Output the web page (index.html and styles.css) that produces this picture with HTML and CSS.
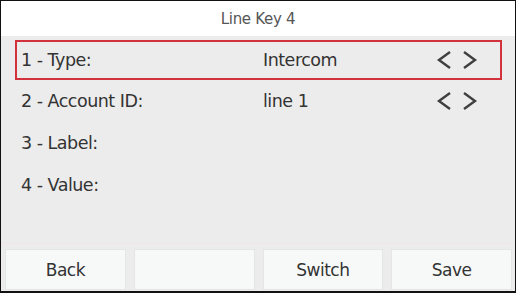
FILE: index.html
```html
<!DOCTYPE html>
<html>

<head>
  <meta charset="UTF-8">
  <link rel="stylesheet" href="styles.css">
</head>

<body>
  <div class="screen">
    <div class="title-bar">Line Key 4</div>
    <div class="list">
      <div class="row selected">
        <span class="label">1 - Type:</span>
        <span class="value">Intercom</span>
        <span class="arrows">
          <svg width="16" height="20" viewBox="0 0 16 20"><path d="M14 2 L3 10 L14 18" fill="none" stroke="#3f3f3f" stroke-width="2.4" /></svg>
          <svg width="16" height="20" viewBox="0 0 16 20"><path d="M2 2 L13 10 L2 18" fill="none" stroke="#3f3f3f" stroke-width="2.4" /></svg>
        </span>
      </div>
      <div class="row">
        <span class="label">2 - Account ID:</span>
        <span class="value">line 1</span>
        <span class="arrows">
          <svg width="16" height="20" viewBox="0 0 16 20"><path d="M14 2 L3 10 L14 18" fill="none" stroke="#3f3f3f" stroke-width="2.4" /></svg>
          <svg width="16" height="20" viewBox="0 0 16 20"><path d="M2 2 L13 10 L2 18" fill="none" stroke="#3f3f3f" stroke-width="2.4" /></svg>
        </span>
      </div>
      <div class="row">
        <span class="label">3 - Label:</span>
      </div>
      <div class="row">
        <span class="label">4 - Value:</span>
      </div>
    </div>
    <div class="softkeys">
      <div class="key">Back</div>
      <div class="key"></div>
      <div class="key">Switch</div>
      <div class="key">Save</div>
    </div>
  </div>
</body>

</html>
```

FILE: styles.css
```css
body {
  margin: 0;
  font-family: "DejaVu Sans", sans-serif;
  background-color: #000;
}

.screen {
  width: 516px;
  height: 293px;
  box-sizing: border-box;
  border: 1px solid #111;
  border-bottom-width: 2px;
  background-color: #ececec;
  display: flex;
  flex-direction: column;
  color: #333;
}

.title-bar {
  height: 35px;
  background-color: #fff;
  display: flex;
  align-items: center;
  justify-content: center;
  font-size: 15px;
  color: #555;
  letter-spacing: -0.3px;
}

.list {
  flex: 1;
  padding: 4px 13px 0 14px;
}

.row {
  height: 42px;
  box-sizing: border-box;
  display: flex;
  align-items: center;
  padding-left: 4px;
  font-size: 17.5px;
  letter-spacing: -0.5px;
  border: 2px solid transparent;
}

.row.selected {
  height: 40px;
  border-color: #d2323c;
}

.label {
  width: 242px;
}

.value {
  width: 173px;
}

.arrows {
  display: flex;
  gap: 10px;
}

.arrows svg {
  display: block;
}

.softkeys {
  display: flex;
  gap: 8px;
  padding: 5px 3px 1px 4px;
  border-top: 1px solid #efe6e8;
  height: 41px;
}

.key {
  flex: 1;
  background-color: #f7f9f9;
  border: 1px solid #e4e6e6;
  display: flex;
  align-items: center;
  justify-content: center;
  font-size: 17px;
  letter-spacing: -0.5px;
  color: #333;
}
```
